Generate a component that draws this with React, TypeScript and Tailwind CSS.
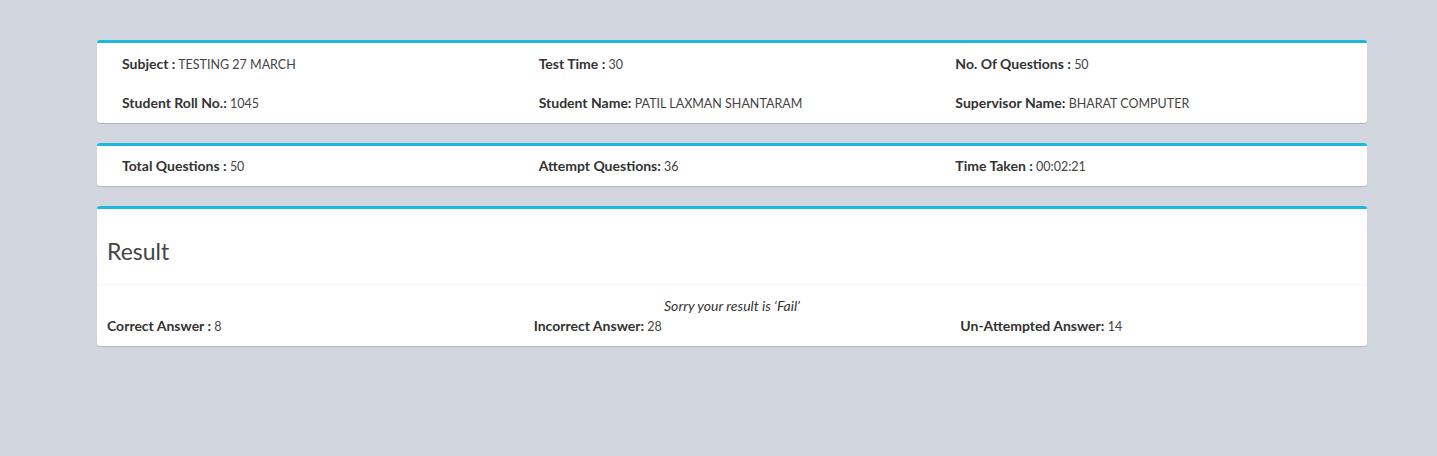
import React from 'react';

type Field = { label: string; value: string };

function Item({ label, value }: Field) {
  return (
    <span>
      <b className="text-[14px] font-bold text-[#333]">{label}</b>{' '}
      <span className="text-[#444]">{value}</span>
    </span>
  );
}

export default function App() {
  return (
    <div
      className="min-h-[456px] bg-[#d2d6de] pt-[40px] text-[12.5px] leading-[18px]"
      style={{ fontFamily: "Lato, 'Noto Sans', sans-serif" }}
    >
      <div className="ml-[97px] flex w-[1270px] flex-col gap-[20px]">
        {/* exam info */}
        <div className="rounded-[3px] border-t-[3px] border-[#1cb8de] bg-white px-2.5 pt-[1px] shadow-[0_1px_1px_rgba(0,0,0,0.15)]">
          <div className="grid h-[40px] grid-cols-3 items-center">
            <div className="px-[15px]"><Item label="Subject :" value="TESTING 27 MARCH" /></div>
            <div className="px-[15px]"><Item label="Test Time :" value="30" /></div>
            <div className="px-[15px]"><Item label="No. Of Questions :" value="50" /></div>
          </div>
          <div className="grid h-[39px] grid-cols-3 items-center">
            <div className="px-[15px]"><Item label="Student Roll No.:" value="1045" /></div>
            <div className="px-[15px]"><Item label="Student Name:" value="PATIL LAXMAN SHANTARAM" /></div>
            <div className="px-[15px]"><Item label="Supervisor Name:" value="BHARAT COMPUTER" /></div>
          </div>
        </div>

        {/* attempt summary */}
        <div className="rounded-[3px] border-t-[3px] border-[#1cb8de] bg-white px-2.5 shadow-[0_1px_1px_rgba(0,0,0,0.15)]">
          <div className="grid h-[40px] grid-cols-3 items-center">
            <div className="px-[15px]"><Item label="Total Questions :" value="50" /></div>
            <div className="px-[15px]"><Item label="Attempt Questions:" value="36" /></div>
            <div className="px-[15px]"><Item label="Time Taken :" value="00:02:21" /></div>
          </div>
        </div>

        {/* result */}
        <div className="rounded-[3px] border-t-[3px] border-[#1cb8de] bg-white shadow-[0_1px_1px_rgba(0,0,0,0.15)]">
          <div className="flex h-[76px] items-center border-b border-[#f4f4f4] px-2.5 pt-[9px]">
            <h3 className="text-[23px] font-normal text-[#444]">Result</h3>
          </div>
          <div className="px-2.5 pt-[12px] pb-[10px]">
            <p className="text-center text-[14px] italic text-[#333]">Sorry your result is ‘Fail’</p>
            <div className="-mx-[15px] mt-[2px] grid grid-cols-3">
              <div className="px-[15px]"><Item label="Correct Answer :" value="8" /></div>
              <div className="px-[15px]"><Item label="Incorrect Answer:" value="28" /></div>
              <div className="px-[15px]"><Item label="Un-Attempted Answer:" value="14" /></div>
            </div>
          </div>
        </div>
      </div>
    </div>
  );
}
